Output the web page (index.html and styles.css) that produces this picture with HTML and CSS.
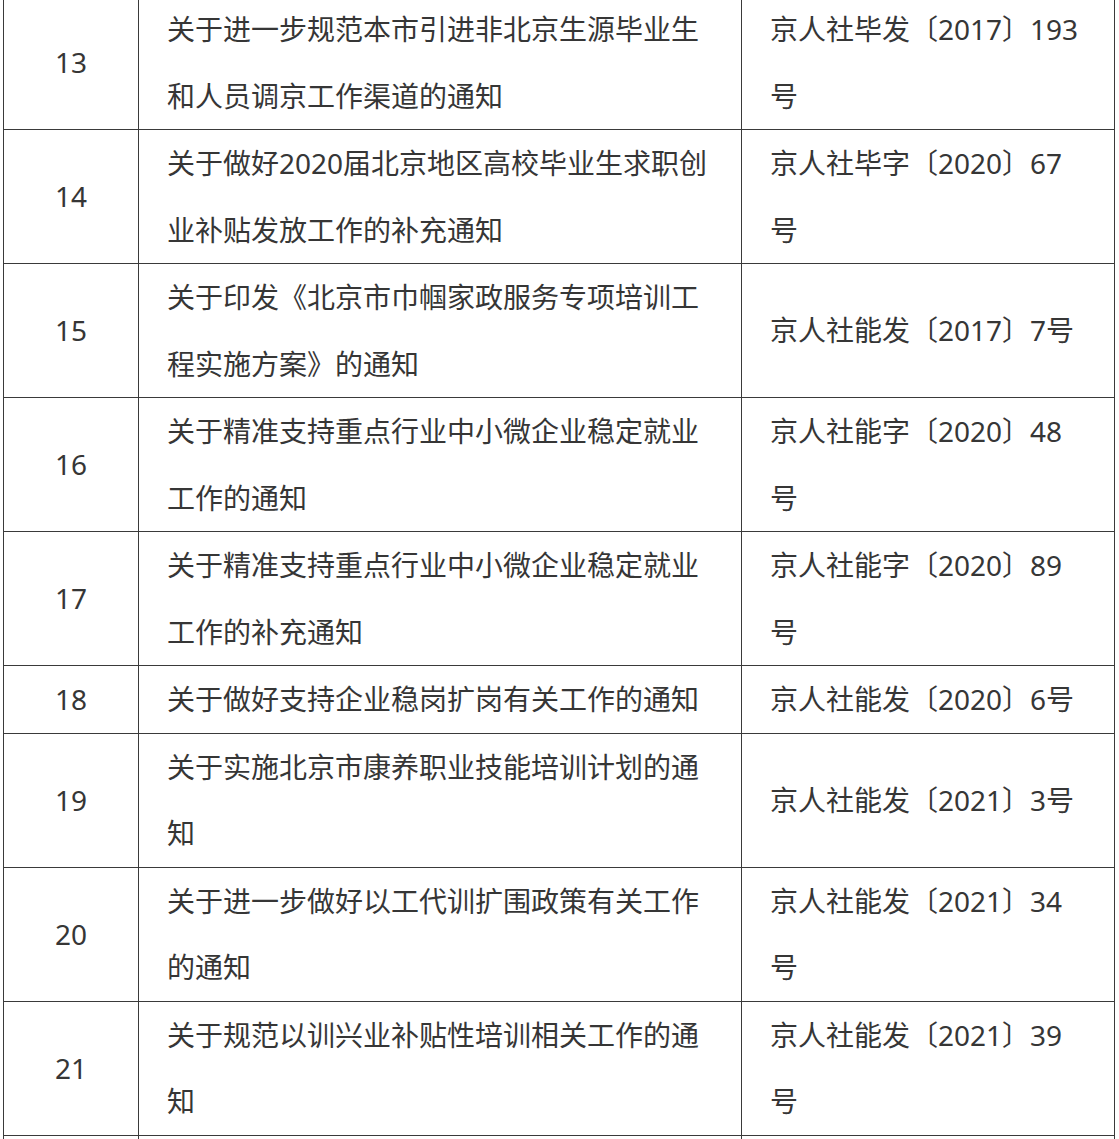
FILE: index.html
```html
<!DOCTYPE html>
<html lang="zh-CN">
<head>
<meta charset="utf-8">
<link rel="stylesheet" href="styles.css">
</head>
<body>
<table class="policy">
  <colgroup>
    <col class="c-num">
    <col class="c-title">
    <col class="c-code">
  </colgroup>
  <tbody>
    <tr><td class="num">13</td><td class="title">关于进一步规范本市引进非北京生源毕业生和人员调京工作渠道的通知</td><td class="code">京人社毕发〔2017〕193号</td></tr>
    <tr><td class="num">14</td><td class="title">关于做好2020届北京地区高校毕业生求职创业补贴发放工作的补充通知</td><td class="code">京人社毕字〔2020〕67号</td></tr>
    <tr><td class="num">15</td><td class="title">关于印发《北京市巾帼家政服务专项培训工程实施方案》的通知</td><td class="code">京人社能发〔2017〕7号</td></tr>
    <tr><td class="num">16</td><td class="title">关于精准支持重点行业中小微企业稳定就业工作的通知</td><td class="code">京人社能字〔2020〕48号</td></tr>
    <tr><td class="num">17</td><td class="title">关于精准支持重点行业中小微企业稳定就业工作的补充通知</td><td class="code">京人社能字〔2020〕89号</td></tr>
    <tr><td class="num">18</td><td class="title">关于做好支持企业稳岗扩岗有关工作的通知</td><td class="code">京人社能发〔2020〕6号</td></tr>
    <tr><td class="num">19</td><td class="title">关于实施北京市康养职业技能培训计划的通知</td><td class="code">京人社能发〔2021〕3号</td></tr>
    <tr><td class="num">20</td><td class="title">关于进一步做好以工代训扩围政策有关工作的通知</td><td class="code">京人社能发〔2021〕34号</td></tr>
    <tr><td class="num">21</td><td class="title">关于规范以训兴业补贴性培训相关工作的通知</td><td class="code">京人社能发〔2021〕39号</td></tr>
    <tr class="tail"><td class="num">&nbsp;</td><td class="title">&nbsp;</td><td class="code">&nbsp;</td></tr>
  </tbody>
</table>
</body>
</html>
```

FILE: styles.css
```css
html, body {
  margin: 0;
  padding: 0;
  background: #ffffff;
}
body {
  font-family: "Noto Sans", "Noto Sans CJK SC", sans-serif;
  color: #363636;
  overflow: hidden;
}
.policy {
  border-collapse: collapse;
  table-layout: fixed;
  width: 1111px;
  margin: -5px 0 0 3px;
  font-size: 28px;
  line-height: 66.5px;
}
.c-num { width: 135px; }
.c-title { width: 603px; }
.c-code { width: 373px; }
.policy td {
  border: 1px solid #3a3a3a;
  padding: 0 28px;
  vertical-align: middle;
  word-break: break-all;
}
.policy td.num {
  text-align: center;
  padding: 0;
}
.policy td.title,
.policy td.code {
  text-align: left;
}
```
